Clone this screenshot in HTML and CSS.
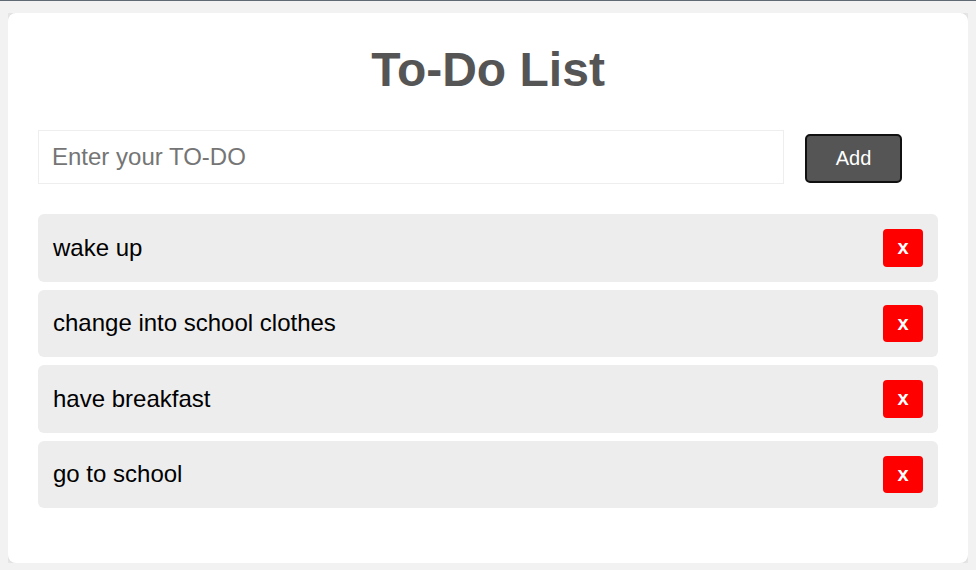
FILE: index.html
```html
<!DOCTYPE html>
<html lang="en">
<head>
<meta charset="utf-8">
<title>To-Do List</title>
<link rel="stylesheet" href="styles.css">
</head>
<body>
<div class="card">
  <h1 class="title">To-Do List</h1>
  <form class="add-form" onsubmit="return false">
    <input class="todo-input" type="text" placeholder="Enter your TO-DO">
    <button class="add-btn" type="button">Add</button>
  </form>
  <ul class="todo-list">
    <li class="todo-item"><span class="todo-text">wake up</span><button class="del-btn" type="button">x</button></li>
    <li class="todo-item"><span class="todo-text">change into school clothes</span><button class="del-btn" type="button">x</button></li>
    <li class="todo-item"><span class="todo-text">have breakfast</span><button class="del-btn" type="button">x</button></li>
    <li class="todo-item"><span class="todo-text">go to school</span><button class="del-btn" type="button">x</button></li>
  </ul>
</div>
</body>
</html>
```

FILE: styles.css
```css
html {
  background: linear-gradient(#5f6a75 0 1px, #f2f2f2 1px);
  min-height: 100%;
}
body {
  margin: 13px 8px 8px;
  font-family: "Liberation Sans", Arial, sans-serif;
}
.card {
  background: #fff;
  border-radius: 8px;
  box-shadow: 0 0 14px rgba(0, 0, 0, 0.2);
  padding: 30px 30px 55px;
  height: 550px;
  box-sizing: border-box;
}
.title {
  margin: 0 0 33px;
  text-align: center;
  font-size: 48px;
  font-weight: bold;
  color: #555;
  line-height: 54px;
}
.add-form {
  display: flex;
  align-items: center;
  margin: 0 0 30px;
}
.todo-input {
  width: 746px;
  height: 54px;
  box-sizing: border-box;
  border: 1px solid #eee;
  padding: 0 13px;
  font-family: "Liberation Sans", Arial, sans-serif;
  font-size: 24px;
  color: #333;
  outline: none;
  margin: 0;
}
.todo-input::placeholder {
  color: #757575;
}
.add-btn {
  margin: 2px 0 0 21px;
  width: 97px;
  height: 49px;
  box-sizing: border-box;
  background: #555;
  color: #fff;
  border: 2px solid #111;
  border-radius: 5px;
  font-family: "Liberation Sans", Arial, sans-serif;
  font-size: 20px;
  padding: 0;
}
.todo-list {
  list-style: none;
  margin: 0;
  padding: 0;
  display: flex;
  flex-direction: column;
  gap: 8px;
}
.todo-item {
  display: flex;
  align-items: center;
  justify-content: space-between;
  background: #ededed;
  border-radius: 6px;
  padding: 15px;
}
.todo-text {
  font-size: 24px;
  color: #000;
}
.del-btn {
  width: 40px;
  height: 37.5px;
  background: #ff0000;
  color: #fff;
  border: none;
  border-radius: 4px;
  font-family: "Liberation Sans", Arial, sans-serif;
  font-size: 20px;
  font-weight: bold;
  padding: 0;
}
```
